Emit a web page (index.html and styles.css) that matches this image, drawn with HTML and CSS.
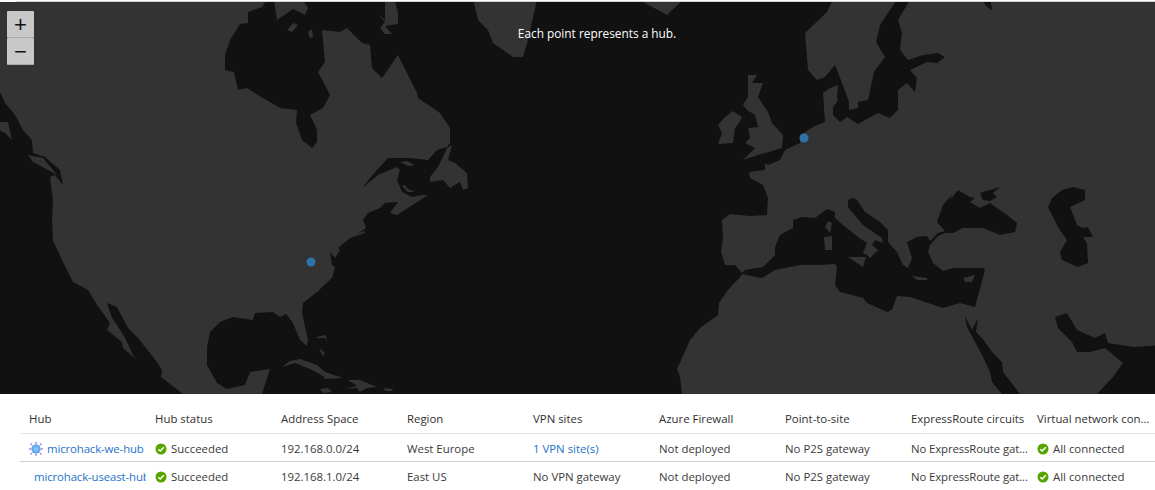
FILE: index.html
```html
<!DOCTYPE html>
<html lang="en">
<head>
<meta charset="utf-8">
<title>Hubs</title>
<link rel="stylesheet" href="styles.css">
</head>
<body>
<div class="topline"></div>
<section class="map">
  <svg class="map-art" viewBox="0 2 1155 392" width="1155" height="392" aria-hidden="true">
    <g class="soft">
    <rect class="land" x="-10" y="-10" width="1175" height="414"/>
    <path class="water" d="M-5,85 0,92 5,103 15,115 23,130 32,140 33,153 45,157 60,170 63,185 55,175 50,177 53,200 52,222 53,241 63,262 73,282 88,290 97,305 110,323 107,330 122,342 123,348 137,360 133,355 125,338 117,325 112,318 107,303 117,307 128,328 138,338 157,362 162,370 161,377 183,394 190,400 -5,400Z"/>
    <path class="water" d="M270,-5 262,7 248,12 248,23 240,24 230,40 225,55 225,70 234,72 238,90 247,88 263,98 280,108 297,110 296,123 302,140 312,148 317,142 317,130 310,115 323,108 330,95 318,72 325,62 322,30 340,32 347,28 362,43 370,45 372,68 382,78 398,55 417,93 418,98 440,113 450,128 450,143 447,147 437,150 428,160 410,158 388,158 375,172 362,188 378,175 397,167 400,170 397,180 402,192 412,197 423,195 428,195 397,215 390,213 398,202 385,203 380,208 368,213 363,220 366,228 350,238 338,248 340,250 335,258 330,252 332,265 335,267 332,278 317,292 303,303 302,313 308,340 307,346 300,340 293,323 286,314 280,317 273,312 255,313 253,320 233,317 220,322 210,332 207,347 207,365 217,383 227,389 245,385 250,372 270,369 262,394 262,400 682,400 682,394 680,377 677,369 682,358 690,340 700,328 718,315 719,303 728,290 740,277 742,274 762,278 775,270 800,265 818,265 835,264 837,267 835,285 840,292 863,298 867,303 887,312 892,310 897,296 910,297 943,308 960,303 975,307 985,270 983,268 953,268 943,271 933,263 928,252 930,245 938,236 945,233 953,233 963,228 983,228 1000,235 1015,232 1017,223 1007,215 990,203 980,208 970,202 975,198 970,197 958,190 950,200 952,195 943,205 937,222 945,231 938,233 930,241 927,236 917,237 907,242 912,258 908,268 903,265 897,252 888,242 888,230 880,222 865,212 857,200 853,198 848,200 848,207 863,225 882,238 883,243 875,240 872,245 878,250 870,258 867,255 863,253 867,243 858,237 843,225 835,218 835,212 827,209 815,218 802,217 793,220 793,228 780,235 775,247 775,255 763,267 745,270 742,273 735,265 725,265 721,252 723,238 722,220 730,214 750,216 767,215 768,198 763,185 750,178 749,172 765,170 765,163 768,165 780,160 785,150 800,143 800,135 815,126 825,122 823,93 830,88 838,85 837,97 838,100 833,107 833,115 840,122 847,117 858,124 878,113 890,118 898,110 898,90 907,83 915,92 917,78 910,70 927,62 937,63 945,57 938,53 923,55 908,60 900,50 902,33 898,20 913,-5 900,-5 880,25 876,42 885,57 874,72 868,100 858,102 858,108 849,110 849,102 842,83 835,65 825,77 817,80 808,70 805,33 827,12 835,-5Z"/>
    <path class="water" d="M980,193 1000,187 993,193 997,197 990,201 983,200Z"/>
    <path class="water" d="M965,316 972,330 978,318 976,332 982,338 992,352 1002,362 1003,372 1020,394 1025,400 1002,400 1002,394 992,382 990,372 982,355 967,327Z"/>
    <path class="water" d="M1055,317 1067,313 1077,330 1095,338 1105,333 1108,343 1133,347 1165,345 1165,400 1092,400 1097,394 1113,377 1123,363 1105,348 1090,352 1077,352 1072,342 1058,328Z"/>
    <path class="water" d="M1048,207 1052,198 1062,190 1073,187 1085,190 1085,200 1070,207 1077,225 1083,228 1088,227 1093,237 1083,237 1087,243 1088,263 1078,267 1062,260 1060,252 1067,240 1058,227Z"/>
    <path class="water" d="M980,-5 990,-5 992,10 986,6Z"/>
    <path class="land" d="M273,-5 277,20 293,9 305,15 308,8 300,-5Z"/>
    <path class="land" d="M287,30 293,23 298,25 292,32Z"/>
    <path class="land" d="M308,32 312,29 313,37 310,38Z"/>
    <path class="land" d="M377,13 385,20 385,-5 393,-5 398,12 398,24 385,26 392,34 385,34 380,28 385,22Z"/>
    <path class="land" d="M472,-5 478,20 488,30 493,43 513,57 523,57 528,40 538,-5Z"/>
    <path class="land" d="M640,-5 645,3 667,15 688,-5Z"/>
    <path class="land" d="M447,148 452,145 448,160 455,163 467,173 468,188 463,190 460,182 450,188 443,180 430,182 430,177 438,167Z"/>
    <path class="land" d="M400,162 407,161 415,165 408,166Z"/>
    <path class="land" d="M402,186 408,192 415,192 408,189 405,185Z"/>
    <path class="land" d="M346,237 364,231 365,233 350,238Z"/>
    <path class="land" d="M28,155 43,158 57,175 48,170 33,162Z"/>
    <path class="land" d="M-5,122 8,122 12,140 5,133 -5,128Z"/>
    <path class="land" d="M748,75 757,75 752,83 763,83 758,97 768,112 772,123 783,135 782,148 758,155 743,160 755,148 745,143 750,138 748,128 758,127 755,115 747,110 743,105 748,97Z"/>
    <path class="land" d="M718,125 725,117 733,111 742,117 739,123 735,128 733,143 718,144 722,133Z"/>
    <path class="land" d="M282,367 290,361 300,359 317,365 325,372 343,378 325,379 323,376 310,369 295,363Z"/>
    <path class="land" d="M348,380 360,380 377,387 367,388 360,392 357,388 343,389 357,386Z"/>
    <path class="land" d="M320,389 328,388 332,392 323,393Z"/>
    <path class="land" d="M384,388 393,389 392,391 385,391Z"/>
    <path class="land" d="M316,337 326,335 327,342 325,338 317,338Z"/>
    <path class="land" d="M319,348 324,352 324,356 322,355Z"/>
    <path class="land" d="M825,227 828,221 832,223 830,233Z"/>
    <path class="land" d="M824,237 832,236 832,250 825,250Z"/>
    <path class="land" d="M848,257 866,257 863,267 857,263Z"/>
    <path class="land" d="M912,276 927,278 927,280 917,280Z"/>
    <path class="land" d="M963,278 975,275 972,282 965,282Z"/>
    </g>
    <circle class="point" cx="311" cy="262" r="4.5"/>
    <circle class="point" cx="804" cy="138" r="4.5"/>
  </svg>
  <div class="zoom">
    <button class="zoom-btn" type="button">+</button>
    <button class="zoom-btn" type="button">−</button>
  </div>
  <p class="caption">Each point represents a hub.</p>
</section>
<section class="table">
  <div class="row head">
    <div class="cell">Hub</div>
    <div class="cell">Hub status</div>
    <div class="cell">Address Space</div>
    <div class="cell">Region</div>
    <div class="cell">VPN sites</div>
    <div class="cell">Azure Firewall</div>
    <div class="cell">Point-to-site</div>
    <div class="cell">ExpressRoute circuits</div>
    <div class="cell">Virtual network con...</div>
  </div>
  <div class="row body">
    <div class="cell hub">
      <svg class="hub-icon" viewBox="0 0 14 14" width="14" height="14" aria-hidden="true">
        <defs><radialGradient id="sphere"><stop offset="0" stop-color="#9accf7"/><stop offset="1" stop-color="#4f9be8"/></radialGradient></defs>
        <path class="spoke" d="M7,1V13M1,7H13M2.5,2.5 11.5,11.5M11.5,2.5 2.5,11.5"/>
        <circle cx="7" cy="7" r="4.6" fill="url(#sphere)"/>
        <g class="node"><circle cx="7" cy="1" r="0.9"/><circle cx="7" cy="13" r="0.9"/><circle cx="1" cy="7" r="0.9"/><circle cx="13" cy="7" r="0.9"/><circle cx="2.2" cy="2.2" r="1"/><circle cx="11.8" cy="2.2" r="1"/><circle cx="2.2" cy="11.8" r="1"/><circle cx="11.8" cy="11.8" r="1"/></g>
      </svg>
      <a class="link name tight">microhack-we-hub</a>
    </div>
    <div class="cell status"><svg class="ok" viewBox="0 0 12 12" width="12" height="12" aria-hidden="true"><circle cx="6" cy="6" r="5.5"/><path d="M3.3,6.2 5.2,8 8.8,4.2"/></svg><span>Succeeded</span></div>
    <div class="cell">192.168.0.0/24</div>
    <div class="cell">West Europe</div>
    <div class="cell"><a class="link">1 VPN site(s)</a></div>
    <div class="cell">Not deployed</div>
    <div class="cell">No P2S gateway</div>
    <div class="cell tight">No ExpressRoute gat...</div>
    <div class="cell status"><svg class="ok" viewBox="0 0 12 12" width="12" height="12" aria-hidden="true"><circle cx="6" cy="6" r="5.5"/><path d="M3.3,6.2 5.2,8 8.8,4.2"/></svg><span>All connected</span></div>
  </div>
  <div class="row body second">
    <div class="cell hub bare"><a class="link name tight">microhack-useast-hub</a></div>
    <div class="cell status"><svg class="ok" viewBox="0 0 12 12" width="12" height="12" aria-hidden="true"><circle cx="6" cy="6" r="5.5"/><path d="M3.3,6.2 5.2,8 8.8,4.2"/></svg><span>Succeeded</span></div>
    <div class="cell">192.168.1.0/24</div>
    <div class="cell">East US</div>
    <div class="cell">No VPN gateway</div>
    <div class="cell">Not deployed</div>
    <div class="cell">No P2S gateway</div>
    <div class="cell tight">No ExpressRoute gat...</div>
    <div class="cell status"><svg class="ok" viewBox="0 0 12 12" width="12" height="12" aria-hidden="true"><circle cx="6" cy="6" r="5.5"/><path d="M3.3,6.2 5.2,8 8.8,4.2"/></svg><span>All connected</span></div>
  </div>
</section>
</body>
</html>
```
FILE: styles.css
```css
* { box-sizing: border-box; }
html, body { margin: 0; padding: 0; background: #fff; overflow: hidden; }
body { width: 1155px; height: 490px; font-family: "Open Sans", "Noto Sans", sans-serif; font-size: 11.4px; color: #3b3a39; }
.topline { height: 1px; margin: 1px 0 0 16px; background: #d0d0d0; }
.map { position: relative; height: 392px; background: #111; overflow: hidden; }
.map-art { display: block; }
.soft { filter: blur(0.5px); }
.land { fill: #333; }
.water { fill: #111; }
.point { fill: #2d73a8; }
.zoom { position: absolute; left: 7px; top: 9px; display: flex; flex-direction: column; width: 27px; }
.zoom-btn { width: 27px; height: 27px; padding: 0; border: 0; border-bottom: 1px solid #a8a8a8; border-radius: 1px; background: #c8c8c8; color: #111; font-family: "Liberation Sans", sans-serif; font-size: 22px; line-height: 25px; }
.caption { position: absolute; left: 0; right: 0; top: 23px; margin: 0 0 0 39px; text-align: center; color: #fff; font-size: 11.85px; line-height: 16px; }
.table { padding-left: 20px; }
.row { display: grid; grid-template-columns: repeat(9, 126px); align-items: center; }
.head { height: 40px; padding-top: 10px; border-bottom: 1px solid #e6e6e6; color: #323130; }
.body { height: 28px; padding-top: 2px; border-bottom: 1px solid #cfcfcf; }
.second { border-bottom-color: transparent; }
.cell { padding-left: 9px; white-space: nowrap; overflow: hidden; line-height: 16px; }
.tight { letter-spacing: -0.12px; }
.hub { display: flex; align-items: center; gap: 4px; }
.bare { padding-left: 14px; }
.name { overflow: hidden; }
.link { color: #2272c9; }
.hub-icon { flex: none; }
.spoke { stroke: #c3aef0; stroke-width: 0.6; fill: none; }
.node { fill: #a884e6; }
.status { display: flex; align-items: center; gap: 4px; }
.ok { flex: none; }
.ok circle { fill: #57a300; }
.ok path { fill: none; stroke: #fff; stroke-width: 1.5; }
```
